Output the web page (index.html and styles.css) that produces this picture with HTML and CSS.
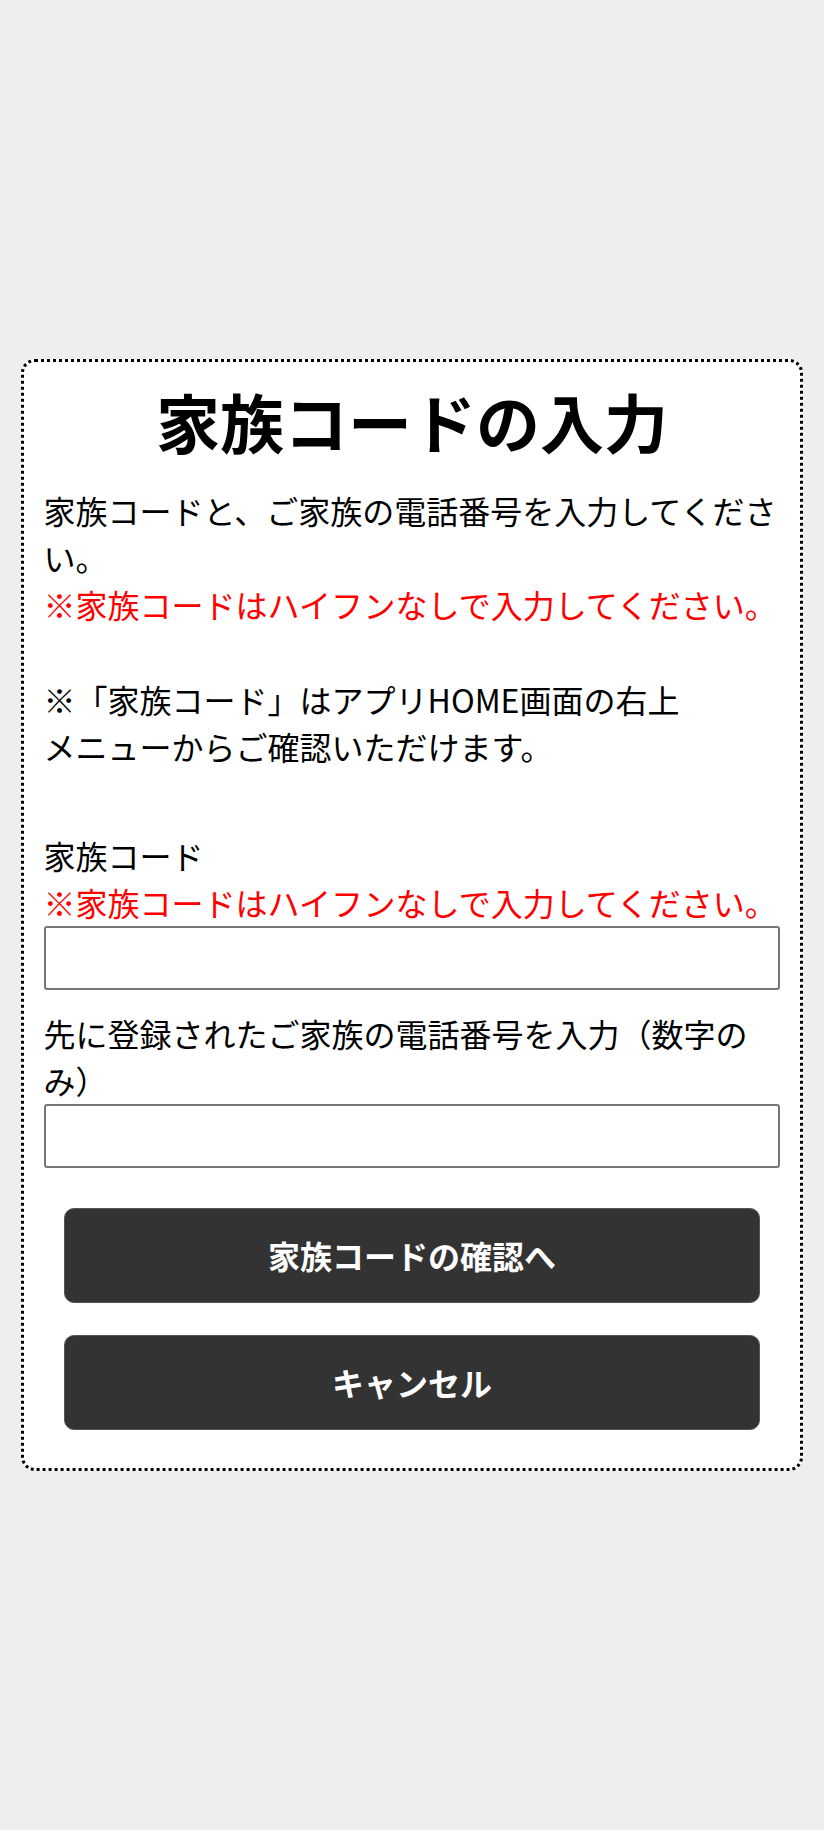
FILE: index.html
```html
<!DOCTYPE html>
<html lang="ja">
<head>
<meta charset="utf-8">
<title>家族コードの入力</title>
<link rel="stylesheet" href="styles.css">
</head>
<body>
<main class="card">
  <h1 class="title">家族コードの入力</h1>
  <p class="intro">家族コードと、ご家族の電話番号を入力してください。<br><span class="note">※家族コードはハイフンなしで入力してください。</span><br><br>※「家族コード」はアプリHOME画面の右上<br>メニューからご確認いただけます。</p>
  <form class="form">
    <label class="label" for="code">家族コード<br><span class="note">※家族コードはハイフンなしで入力してください。</span></label>
    <input class="field" id="code" type="text">
    <label class="label label-second" for="tel">先に登録されたご家族の電話番号を入力（数字のみ）</label>
    <input class="field" id="tel" type="text">
    <div class="actions">
      <button class="btn" type="button">家族コードの確認へ</button>
      <button class="btn" type="button">キャンセル</button>
    </div>
  </form>
</main>
</body>
</html>
```
FILE: styles.css
```css
html, body {
  margin: 0;
  padding: 0;
}
body {
  background: #eeeeee;
  min-height: 100vh;
  display: flex;
  align-items: center;
  justify-content: center;
  font-family: "Noto Sans CJK JP", "Noto Sans", sans-serif;
  font-size: 32px;
  line-height: 1.47;
  color: #000;
}
.card {
  width: 95%;
  box-sizing: border-box;
  background: #fff;
  border: 3px dotted #000;
  border-radius: 14px;
  padding: 11px 20px 38px;
}
.title {
  margin: 0 0 20px;
  font-size: 64px;
  font-weight: 700;
  line-height: 1.47;
  text-align: center;
}
.intro {
  margin: 0 0 62px;
}
.note {
  color: #ff0000;
}
.form {
  display: flex;
  flex-direction: column;
  margin: 0;
}
.label {
  display: block;
}
.label-second {
  margin-top: 20px;
}
.field {
  display: block;
  width: 100%;
  height: 64px;
  box-sizing: border-box;
  margin: 0;
  padding: 0 8px;
  border: 2px solid #767676;
  border-radius: 3px;
  background: #fff;
  font-size: 32px;
  font-family: inherit;
}
.actions {
  display: flex;
  flex-direction: column;
  align-items: center;
  gap: 32px;
  margin-top: 40px;
}
.btn {
  width: calc(100% - 40px);
  height: 95px;
  border: 1px solid #555;
  border-radius: 10px;
  background: #333333;
  color: #fff;
  font-family: inherit;
  font-size: 32px;
  font-weight: 700;
  cursor: pointer;
}
```
